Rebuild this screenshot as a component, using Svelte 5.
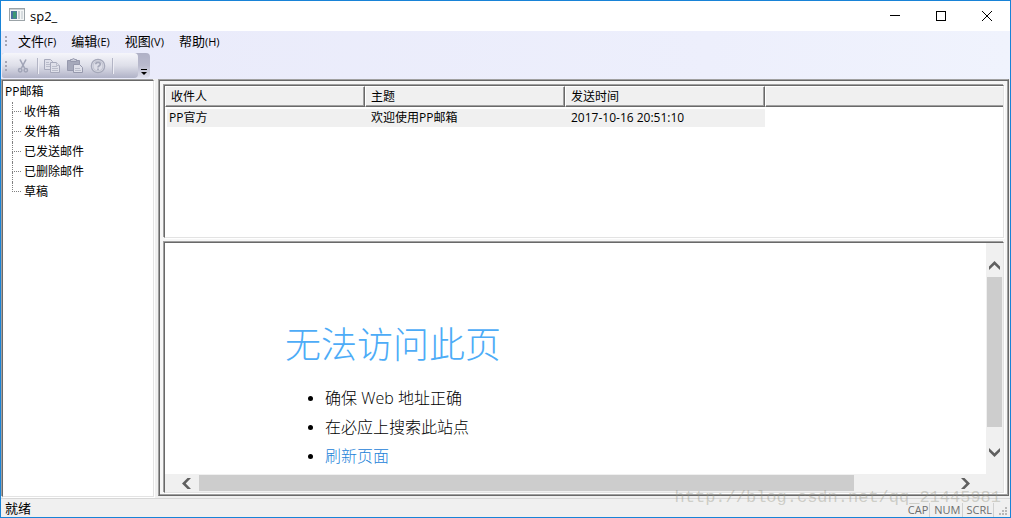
<script lang="ts">
	const menus = [
		{ label: '文件', key: 'F' },
		{ label: '编辑', key: 'E' },
		{ label: '视图', key: 'V' },
		{ label: '帮助', key: 'H' }
	];

	const folders = ['收件箱', '发件箱', '已发送邮件', '已删除邮件', '草稿'];
	const columns = ['收件人', '主题', '发送时间'];
	const mails = [
		{ from: 'PP官方', subject: '欢迎使用PP邮箱', date: '2017-10-16 20:51:10' }
	];
	const indicators = ['CAP', 'NUM', 'SCRL'];

	let folder = $state('');
	let vThumb = $state(92);
	let hThumb = $state(87);
</script>

<div class="window">
	<header class="titlebar">
		<svg class="app-icon" width="16" height="14" viewBox="0 0 16 14">
			<rect x="0.5" y="0.5" width="15" height="12" fill="#f4f6f6" stroke="#9ba3a7" />
			<rect x="1" y="1" width="14" height="1" fill="#c9d0d4" />
			<rect x="2" y="3" width="6" height="8" fill="#4c7f96" />
			<rect x="3" y="4" width="4" height="6" fill="#3c9a74" />
			<rect x="2" y="3" width="2" height="8" fill="#4a6fa0" />
			<rect x="9" y="3" width="2" height="8" fill="#c5cdd1" />
			<rect x="12" y="3" width="2" height="8" fill="#d7dcdf" />
		</svg>
		<span class="title">sp2_</span>
		<button class="caption" aria-label="最小化">
			<svg width="10" height="10" viewBox="0 0 10 10"><path d="M0 4.5H10" stroke="#000" /></svg>
		</button>
		<button class="caption" aria-label="最大化">
			<svg width="10" height="10" viewBox="0 0 10 10"><rect x="0.5" y="0.5" width="9" height="9" fill="none" stroke="#000" /></svg>
		</button>
		<button class="caption" aria-label="关闭">
			<svg width="10" height="10" viewBox="0 0 10 10"><path d="M0 0L10 10M10 0L0 10" stroke="#000" /></svg>
		</button>
	</header>

	<div class="bars">
		<nav class="menubar">
			<span class="grip"></span>
			{#each menus as menu (menu.key)}
				<button class="menu">{menu.label}<small>({menu.key})</small></button>
			{/each}
		</nav>
		<div class="toolbar">
			<div class="tools">
				<span class="grip"></span>
				<button class="tool" aria-label="剪切">
					<svg width="16" height="16" viewBox="0 0 16 16" fill="none" stroke="#a0a4b6">
						<path d="M5 1.5L9.5 10M11 1.5L6.5 10" stroke-width="1.6" />
						<circle cx="5.2" cy="12.3" r="1.7" stroke-width="1.5" />
						<circle cx="10.8" cy="12.3" r="1.7" stroke-width="1.5" />
					</svg>
				</button>
				<span class="sep"></span>
				<button class="tool" aria-label="复制">
					<svg width="16" height="16" viewBox="0 0 16 16" fill="#dfe0ea" stroke="#a6a9bb">
						<path d="M0.5 1.5H6.5L8.5 3.5V11.5H0.5Z" />
						<path d="M2 4.5H5M2 6.5H6M2 8.5H6" stroke="#babdcb" />
						<path d="M6.5 4.5H12.5L15.5 7.5V14.5H6.5Z" />
						<path d="M8 8.5H13M8 10.5H14M8 12.5H14M12.5 4.5V7.5H15.5" stroke="#babdcb" />
					</svg>
				</button>
				<button class="tool" aria-label="粘贴">
					<svg width="16" height="16" viewBox="0 0 16 16" stroke="#9699ad">
						<path d="M0.5 2.5H12.5V12.5H0.5Z" fill="#a6a9bb" />
						<path d="M3.5 3.5V1.5H5L6.5 0.5L8 1.5H9.5V3.5Z" fill="#c9cbd8" />
						<path d="M6.5 6.5H12.5L15.5 9.5V14.5H6.5Z" fill="#dfe0ea" />
						<path d="M8 10.5H13M8 12.5H14" stroke="#babdcb" />
					</svg>
				</button>
				<button class="tool" aria-label="帮助">
					<svg width="16" height="16" viewBox="0 0 16 16" fill="none" stroke="#a5a8b9">
						<circle cx="8" cy="8" r="6.7" stroke-width="1.2" fill="#dcdde7" />
						<circle cx="8" cy="8" r="5" stroke="#bfc1cf" />
						<path d="M5.8 6.3C5.8 3.6 10.3 3.6 10.3 6.3C10.3 7.8 8 7.8 8 9.6M8 10.6V12.2" stroke-width="1.7" />
					</svg>
				</button>
				<span class="sep"></span>
			</div>
			<button class="overflow" aria-label="工具栏选项">
				<svg width="6" height="6" viewBox="0 0 6 6"><path d="M0 0.5H6" stroke="#000" /><path d="M0 3H6L3 6Z" /></svg>
			</button>
		</div>
	</div>

	<div class="workspace">
		<aside class="tree sunken">
			<div class="root">PP邮箱</div>
			<ul>
				{#each folders as name (name)}
					<li>
						<span class="branch"></span>
						<button class:current={folder === name} onclick={() => (folder = name)}>{name}</button>
					</li>
				{/each}
			</ul>
		</aside>

		<main class="frame">
			<section class="list sunken">
				<table>
					<colgroup>
						<col class="fixed" /><col class="fixed" /><col class="fixed" /><col />
					</colgroup>
					<thead>
						<tr>
							{#each columns as column (column)}
								<th>{column}</th>
							{/each}
							<th></th>
						</tr>
					</thead>
					<tbody>
						{#each mails as mail (mail.date)}
							<tr>
								<td>{mail.from}</td>
								<td>{mail.subject}</td>
								<td>{mail.date}</td>
								<td></td>
							</tr>
						{/each}
					</tbody>
				</table>
			</section>

			<section class="viewer sunken">
				<article class="page">
					<h1>无法访问此页</h1>
					<ul>
						<li>确保 Web 地址正确</li>
						<li>在必应上搜索此站点</li>
						<li><a href="#refresh">刷新页面</a></li>
					</ul>
				</article>
				<div class="scroll vertical">
					<button aria-label="向上滚动">
						<svg width="11" height="9" viewBox="0 0 11 9"><path d="M0 5.5L5.5 0L11 5.5V9L5.5 3.7L0 9Z" fill="#606060" /></svg>
					</button>
					<div class="track"><div class="thumb" style:height="{vThumb}%"></div></div>
					<button aria-label="向下滚动">
						<svg width="11" height="9" viewBox="0 0 11 9"><path d="M0 3.5L5.5 9L11 3.5V0L5.5 5.3L0 0Z" fill="#606060" /></svg>
					</button>
				</div>
				<div class="scroll horizontal">
					<button aria-label="向左滚动">
						<svg width="9" height="11" viewBox="0 0 9 11"><path d="M5.5 0L0 5.5L5.5 11H9L3.7 5.5L9 0Z" fill="#606060" /></svg>
					</button>
					<div class="track"><div class="thumb" style:width="{hThumb}%"></div></div>
					<button aria-label="向右滚动">
						<svg width="9" height="11" viewBox="0 0 9 11"><path d="M3.5 0L9 5.5L3.5 11H0L5.3 5.5L0 0Z" fill="#606060" /></svg>
					</button>
				</div>
				<div class="corner"></div>
			</section>
		</main>
	</div>

	<footer class="statusbar">
		<span class="ready">就绪</span>
		{#each indicators as name (name)}
			<span class="indicator">{name}</span>
		{/each}
		<svg class="size-grip" width="9" height="9" viewBox="0 0 9 9" fill="#b8b8b8">
			<path d="M6 0h2v2h-2zM3 3h2v2h-2zM6 3h2v2h-2zM0 6h2v2h-2zM3 6h2v2h-2zM6 6h2v2h-2z" />
		</svg>
	</footer>

	<div class="watermark">http://blog.csdn.net/qq_21445981</div>
</div>

<style>
	:global(body) {
		margin: 0;
	}

	.window {
		position: relative;
		display: flex;
		flex-direction: column;
		box-sizing: border-box;
		height: 100vh;
		border: 1px solid #1883d7;
		background: #f0f0f0;
		color: #000;
		font: 12px/20px 'Open Sans', 'Noto Sans CJK SC', sans-serif;
		overflow: hidden;
	}

	button {
		margin: 0;
		padding: 0;
		border: 0;
		background: none;
		color: inherit;
		font: inherit;
	}

	svg {
		display: block;
		flex-shrink: 0;
	}

	ul {
		margin: 0;
		padding: 0;
		list-style: none;
	}

	.titlebar {
		display: flex;
		align-items: center;
		height: 30px;
		flex-shrink: 0;
		background: #fff;
	}

	.app-icon {
		margin: 0 5px 2px 8px;
	}

	.title {
		flex: 1;
		font-size: 13px;
	}

	.caption {
		display: grid;
		place-items: center;
		width: 46px;
		height: 28px;
	}

	.bars {
		flex-shrink: 0;
		height: 48px;
		background: linear-gradient(to right, #e9eafa, #edeffc 70%, #f0f3fd);
	}

	.menubar {
		display: flex;
		align-items: center;
		gap: 15px;
		height: 20px;
		padding: 0 0 2px 4px;
	}

	.grip {
		width: 2px;
		height: 10px;
		background: repeating-linear-gradient(#a5a5b4 0 2px, transparent 2px 4px);
	}

	.menubar .grip {
		margin-right: -4px;
	}

	.menu {
		font-size: 13px;
		white-space: nowrap;
	}

	.menu small {
		font-size: 11px;
	}

	.toolbar {
		display: flex;
		width: 148px;
		height: 25px;
		margin-left: 1px;
		border-radius: 2px 4px 4px 2px;
		background: linear-gradient(#b0b1c6, #b9bacd 50%, #e0e1ee);
	}

	.tools {
		display: flex;
		align-items: center;
		flex: 1;
		padding-left: 3px;
		border-radius: 2px 4px 4px 2px;
		background: linear-gradient(#f6f6fb, #dedfe9 50%, #b0b2c7);
	}

	.tool {
		margin-left: 7px;
	}

	.tools .grip + .tool {
		margin-left: 8px;
	}

	.sep {
		width: 1px;
		height: 16px;
		margin-left: 6px;
		background: #b3b5c5;
		border-right: 1px solid #eeeef5;
	}

	.sep + .tool {
		margin-left: 5px;
	}

	.overflow {
		display: flex;
		align-items: flex-end;
		justify-content: center;
		width: 12px;
		padding-bottom: 3px;
	}

	.workspace {
		display: flex;
		flex: 1;
		min-height: 0;
		gap: 4px;
		padding: 0 1px 1px 0;
	}

	.sunken {
		margin: 1px 0 0 1px;
		border: 1px solid;
		border-color: #696969 #e3e3e3 #e3e3e3 #696969;
		background: #fff;
		box-shadow: 1px 1px #fff, -1px -1px #a0a0a0;
	}

	.tree {
		box-sizing: border-box;
		width: 152px;
		flex-shrink: 0;
		padding-top: 1px;
	}

	.root {
		padding-left: 2px;
	}

	.tree ul {
		padding-left: 9px;
	}

	.tree li {
		display: flex;
		gap: 3px;
	}

	.branch {
		width: 9px;
		height: 20px;
	}

	.branch::before,
	.branch::after {
		content: '';
		display: block;
		box-sizing: border-box;
		height: 10px;
		border-left: 1px dotted #808080;
	}

	.branch::before {
		border-bottom: 1px dotted #808080;
	}

	.tree li:last-child .branch::after {
		display: none;
	}

	.tree button.current {
		background: #0078d7;
		color: #fff;
	}

	.frame {
		display: flex;
		flex-direction: column;
		flex: 1;
		gap: 3px;
		min-width: 0;
		margin-bottom: 1px;
		padding: 4px 4px 2px;
		border: 1px solid;
		border-color: #a0a0a0 #696969 #696969 #a0a0a0;
		background: #f6f6f6;
		box-shadow: inset 1px 1px #696969, inset -1px -1px #a0a0a0;
	}

	.list {
		flex: 151;
		min-height: 0;
	}

	table {
		width: 100%;
		table-layout: fixed;
		border-collapse: separate;
		border-spacing: 0;
	}

	col.fixed {
		width: 200px;
	}

	th,
	td {
		box-sizing: border-box;
		padding: 0 0 0 6px;
		font-weight: normal;
		text-align: left;
		line-height: 18px;
		white-space: nowrap;
	}

	th {
		padding-left: 5px;
		height: 21px;
		border: 1px solid #696969;
		border-top-color: #fff;
		border-left-color: #fff;
		background: #f0f0f0;
		box-shadow: inset -1px -1px #a0a0a0;
	}

	th:last-child {
		border-right: 0;
		box-shadow: inset 0 -1px #a0a0a0;
	}

	td {
		height: 20px;
		border-top: 2px solid #fff;
		background: #f0f0f0;
		background-clip: padding-box;
	}

	td:first-child {
		padding-left: 2px;
		border-left: 2px solid #fff;
	}

	td:last-child {
		background: #fff;
	}

	.viewer {
		display: grid;
		grid-template: minmax(0, 1fr) 18px / minmax(0, 1fr) 17px;
		flex: 249;
		min-height: 0;
	}

	.page {
		padding: 77px 0 0 120px;
		overflow: hidden;
		font-weight: 300;
	}

	h1 {
		margin: 0 0 14px;
		color: #4dacf7;
		font-size: 36px;
		font-weight: 300;
		line-height: 50px;
	}

	.page ul {
		padding-left: 40px;
		list-style: disc;
		font-size: 16px;
		line-height: 29px;
	}

	.page li::marker {
		font-size: 14px;
	}

	.page a {
		color: #1a82d8;
		text-decoration: none;
	}

	.scroll {
		display: flex;
		background: #f0f0f0;
	}

	.scroll button {
		display: grid;
		place-items: center;
		flex-shrink: 0;
	}

	.vertical {
		flex-direction: column;
		padding: 10px 1px;
	}

	.vertical button {
		height: 24px;
	}

	.horizontal {
		padding: 1px 8px;
	}

	.horizontal button {
		width: 26px;
	}

	.track {
		flex: 1;
		min-height: 0;
	}

	.horizontal .thumb {
		height: 100%;
	}

	.thumb {
		background: #cdcdcd;
	}

	.corner {
		background: #f0f0f0;
	}

	.statusbar {
		display: flex;
		align-items: center;
		height: 18px;
		flex-shrink: 0;
		padding: 0 2px 0 4px;
		border-top: 1px solid #d7d7d7;
	}

	.ready {
		flex: 1;
		font-size: 13px;
	}

	.indicator {
		margin-top: 3px;
		padding: 0 1px 0 4px;
		border-right: 1px solid #d0d0d0;
		color: #6d6d6d;
		font-size: 11px;
		line-height: 14px;
	}

	.size-grip {
		align-self: flex-end;
		margin: 0 0 1px 5px;
	}

	.watermark {
		position: absolute;
		right: 9px;
		bottom: 9px;
		color: rgba(150, 150, 135, 0.4);
		font: 17px/20px 'Liberation Mono', monospace;
		pointer-events: none;
	}
</style>
